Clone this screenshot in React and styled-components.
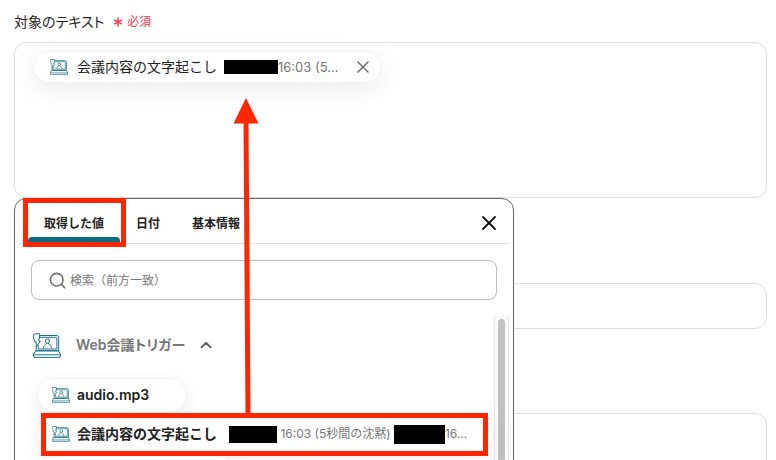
import React, { useState } from "react";

import styled, { createGlobalStyle } from "styled-components";
import { ChevronUp, Search, X } from "lucide-react";

const GlobalStyle = createGlobalStyle`
  * {
    box-sizing: border-box;
  }
  body {
    margin: 0;
    overflow: hidden;
    background: #fff;
    color: #222;
    font-family: Inter, "Noto Sans CJK JP", sans-serif;
    font-size: 14px;
    line-height: 20px;
  }
  button,
  input,
  textarea {
    font: inherit;
    color: inherit;
  }
`;

const S = {
  Page: styled.main`
    position: relative;
    height: 100vh;
    overflow: hidden;
    padding: 11px 9px 0 14px;
  `,
  FieldLabel: styled.div`
    display: flex;
    align-items: center;
    gap: 9px;
    margin-bottom: 10px;
    font-feature-settings: "palt";
  `,
  Required: styled.span`
    display: flex;
    align-items: center;
    gap: 4px;
    padding-top: 1px;
    color: #ff3b4e;
    font-size: 12px;
  `,
  Anchor: styled.div`
    position: relative;
    margin-bottom: 85px;
  `,
  TokenBox: styled.div`
    height: 156px;
    padding: 8px 18px;
    border: 1px solid #dfe0e5;
    border-radius: 12px;
  `,
  Input: styled.input`
    display: block;
    width: 100%;
    height: 46px;
    margin-bottom: 84px;
    padding: 0 16px;
    border: 1px solid #dfe0e5;
    border-radius: 12px;
  `,
  Textarea: styled.textarea`
    display: block;
    width: 100%;
    height: 156px;
    padding: 16px;
    border: 1px solid #dfe0e5;
    border-radius: 12px;
    resize: none;
  `,
  Token: styled.div`
    display: inline-flex;
    align-items: center;
    height: 32px;
    padding: 0 7px 0 16px;
    border: 1px solid #f5f5f5;
    border-radius: 16px;
    background: #fff;
    box-shadow: 0 6px 24px rgba(0, 0, 0, 0.08);
  `,
  TokenName: styled.span`
    margin: 0 7px 0 9px;
  `,
  Detail: styled.span`
    color: #777;
    font-size: ${props => (props.$small ? 12 : 13)}px;
    white-space: pre;
  `,
  Redacted: styled.span`
    flex: none;
    width: ${props => props.$width}px;
    height: ${props => props.$height}px;
    background: #000;
  `,
  IconButton: styled.button`
    display: flex;
    margin-left: ${props => (props.$spaced ? 14 : 0)}px;
    padding: 0;
    border: 0;
    background: none;
    color: ${props => props.$color};
    cursor: pointer;
  `,
  Popover: styled.section`
    position: absolute;
    top: 100%;
    left: 0;
    width: 500px;
    padding: 0 4px;
    border: 1px solid #666;
    border-radius: 12px;
    background: #fff;
  `,
  Header: styled.header`
    display: flex;
    align-items: center;
    justify-content: space-between;
    padding: 0 8px 0 9px;
    border-bottom: 1px solid #e2e2e2;
  `,
  Tabs: styled.div`
    display: flex;
  `,
  Tab: styled.button`
    position: relative;
    height: 44px;
    padding: 6px 16px 0;
    border: 0;
    background: none;
    color: #222;
    font-size: 12px;
    font-weight: 600;
    cursor: pointer;

    &[aria-selected="true"]::before {
      content: "";
      position: absolute;
      right: 0;
      bottom: 1px;
      left: 0;
      height: 5px;
      border-radius: 4px 4px 0 0;
      background: #0b6b80;
    }
  `,
  Close: styled.div`
    padding-top: 4px;
  `,
  SearchBox: styled.label`
    display: flex;
    align-items: center;
    gap: 3px;
    height: 40px;
    margin: 16px 12px;
    padding: 0 16px;
    border: 1px solid #bfbfbf;
    border-radius: 8px;
    color: #707070;

    input {
      flex: 1;
      min-width: 0;
      padding: 2px 0 0;
      border: 0;
      outline: 0;
      background: none;
      font-size: 12px;
    }
    input::placeholder {
      color: #777;
      opacity: 1;
    }
  `,
  Body: styled.div`
    display: flex;
    height: 240px;
  `,
  List: styled.div`
    flex: 1;
    min-width: 0;
    padding: 16px 0 0 14px;
  `,
  Track: styled.div`
    flex: none;
    width: 15px;
    padding: 3px 3px 2px;
    border: 1px solid #e8e8e8;
    border-width: 0 1px;
    background: #fafafa;
  `,
  Thumb: styled.div`
    height: 100%;
    border-radius: 4px;
    background: #c1c1c1;
  `,
  Group: styled.button`
    display: flex;
    align-items: center;
    gap: 12px;
    height: 26px;
    margin-bottom: 20px;
    padding: 0;
    border: 0;
    background: none;
    color: #777;
    font-weight: 600;
    font-feature-settings: "palt";
    cursor: pointer;

    svg:first-child {
      margin-right: 3px;
    }
  `,
  Values: styled.div`
    display: flex;
    flex-direction: column;
    align-items: flex-start;
    gap: 5px;
    padding-left: 4px;
  `,
  Value: styled.button`
    position: relative;
    display: flex;
    align-items: center;
    width: ${props => props.$width};
    height: 34px;
    padding: 0 14px;
    border: 1px solid #f5f5f5;
    border-radius: 17px;
    background: #fff;
    box-shadow: 0 6px 20px rgba(0, 0, 0, 0.08);
    text-align: left;
    white-space: nowrap;
    cursor: pointer;
  `,
  ValueName: styled.span`
    margin: 0 12px 0 7px;
    font-weight: 600;
  `,
  Highlight: styled.span`
    position: absolute;
    z-index: 1;
    inset: ${props => props.$inset};
    border: 5px solid #ff2600;
    pointer-events: none;
  `,
  Arrow: styled.svg`
    position: absolute;
    z-index: 2;
    top: 98px;
    left: 233px;
    pointer-events: none;
  `,
  MeetingIcon: styled.svg`
    flex: none;
    fill: none;
    stroke: #1b7287;
    stroke-linecap: round;
    stroke-linejoin: round;
  `
};

const MeetingIcon = ({ small }) => (
  <S.MeetingIcon
    width={small ? 18 : 28}
    height={small ? 16 : 25}
    viewBox="0 0 28 25"
    strokeWidth={small ? 1.1 : 1}
  >
    <path d="M7 2.5H23.8Q25.7 2.5 25.7 4.4V17.8H3.2V13" />
    <path d="M7 4.3H22.6Q23.9 4.3 23.9 5.6V16H5.2V12.5" />
    <path d="M.7 1.2L6.6 .6V5.8H5.8V8.2L7.4 8.4L3.4 13.4V9.2H1.8V6.6L.7 6Z" />
    <path d="M3 17.8H25.8L27.4 21.8V23Q27.4 24.4 26 24.4H2Q.6 24.4 .6 23V21.8Z" />
    <path d="M.8 21.8H27.2" />
    <circle cx="14.4" cy="8.2" r="2.1" />
    <path d="M10.4 15V14.2C10.4 12.4 12.4 12.6 13.4 10.6M18.4 15V14.2C18.4 12.4 16.4 12.6 15.4 10.6" />
  </S.MeetingIcon>
);

const Asterisk = () => (
  <svg width="10" height="10" viewBox="0 0 10 10" stroke="#ff3b4e" strokeWidth="1.5">
    <path d="M5 .5V9.5M1 2.8L9 7.2M9 2.8L1 7.2" />
  </svg>
);

const tabs = ["取得した値", "日付", "基本情報"];

const ValuePicker = () => {
  const [tab, setTab] = useState(0);

  return (
    <S.Popover>
      <S.Header>
        <S.Tabs role="tablist">
          {tabs.map((name, i) => (
            <S.Tab
              key={name}
              role="tab"
              aria-selected={tab === i}
              onClick={() => setTab(i)}
            >
              {name}
              {i === 0 && <S.Highlight $inset="-1px -6px -4px -5px" />}
            </S.Tab>
          ))}
        </S.Tabs>
        <S.Close>
          <S.IconButton $color="#111" aria-label="閉じる">
            <X size={24} strokeWidth={1.8} />
          </S.IconButton>
        </S.Close>
      </S.Header>
      <S.SearchBox>
        <Search size={19} strokeWidth={2} />
        <input type="text" placeholder="検索（前方一致）" />
      </S.SearchBox>
      <S.Body>
        <S.List>
          <S.Group aria-expanded="true">
            <MeetingIcon />
            Web会議トリガー
            <ChevronUp size={18} strokeWidth={2.6} color="#666" />
          </S.Group>
          <S.Values>
            <S.Value $width="150px">
              <MeetingIcon small />
              <S.ValueName>audio.mp3</S.ValueName>
            </S.Value>
            <S.Value $width="100%">
              <MeetingIcon small />
              <S.ValueName>会議内容の文字起こし</S.ValueName>
              <S.Redacted $width={48} $height={17} />
              <S.Detail $small> 16:03 (5秒間の沈黙) </S.Detail>
              <S.Redacted $width={51} $height={19} />
              <S.Detail $small>16...</S.Detail>
              <S.Highlight $inset="-5px 5px -6px 3px" />
            </S.Value>
            <S.Value $width="198px">
              <MeetingIcon small />
            </S.Value>
          </S.Values>
        </S.List>
        <S.Track>
          <S.Thumb />
        </S.Track>
      </S.Body>
    </S.Popover>
  );
};

const App = () => (
  <>
    <GlobalStyle />
    <S.Page>
      <S.FieldLabel>
        <span id="target-text">対象のテキスト</span>
        <S.Required>
          <Asterisk />
          必須
        </S.Required>
      </S.FieldLabel>
      <S.Anchor>
        <S.TokenBox role="group" aria-labelledby="target-text">
          <S.Token>
            <MeetingIcon small />
            <S.TokenName>会議内容の文字起こし</S.TokenName>
            <S.Redacted $width={54} $height={14} />
            <S.Detail>16:03 (5...</S.Detail>
            <S.IconButton $color="#666" $spaced aria-label="削除">
              <X size={20} strokeWidth={1.6} />
            </S.IconButton>
          </S.Token>
        </S.TokenBox>
        <ValuePicker />
      </S.Anchor>
      <S.Input type="text" aria-label="入力" />
      <S.Textarea aria-label="本文" />
      <S.Arrow width="26" height="318" viewBox="0 0 26 318">
        <path d="M13 20L15 318" stroke="#ff2600" strokeWidth="5" />
        <path d="M13 0L25.5 25.5H.5Z" fill="#ff2600" />
      </S.Arrow>
    </S.Page>
  </>
);

export default App;
